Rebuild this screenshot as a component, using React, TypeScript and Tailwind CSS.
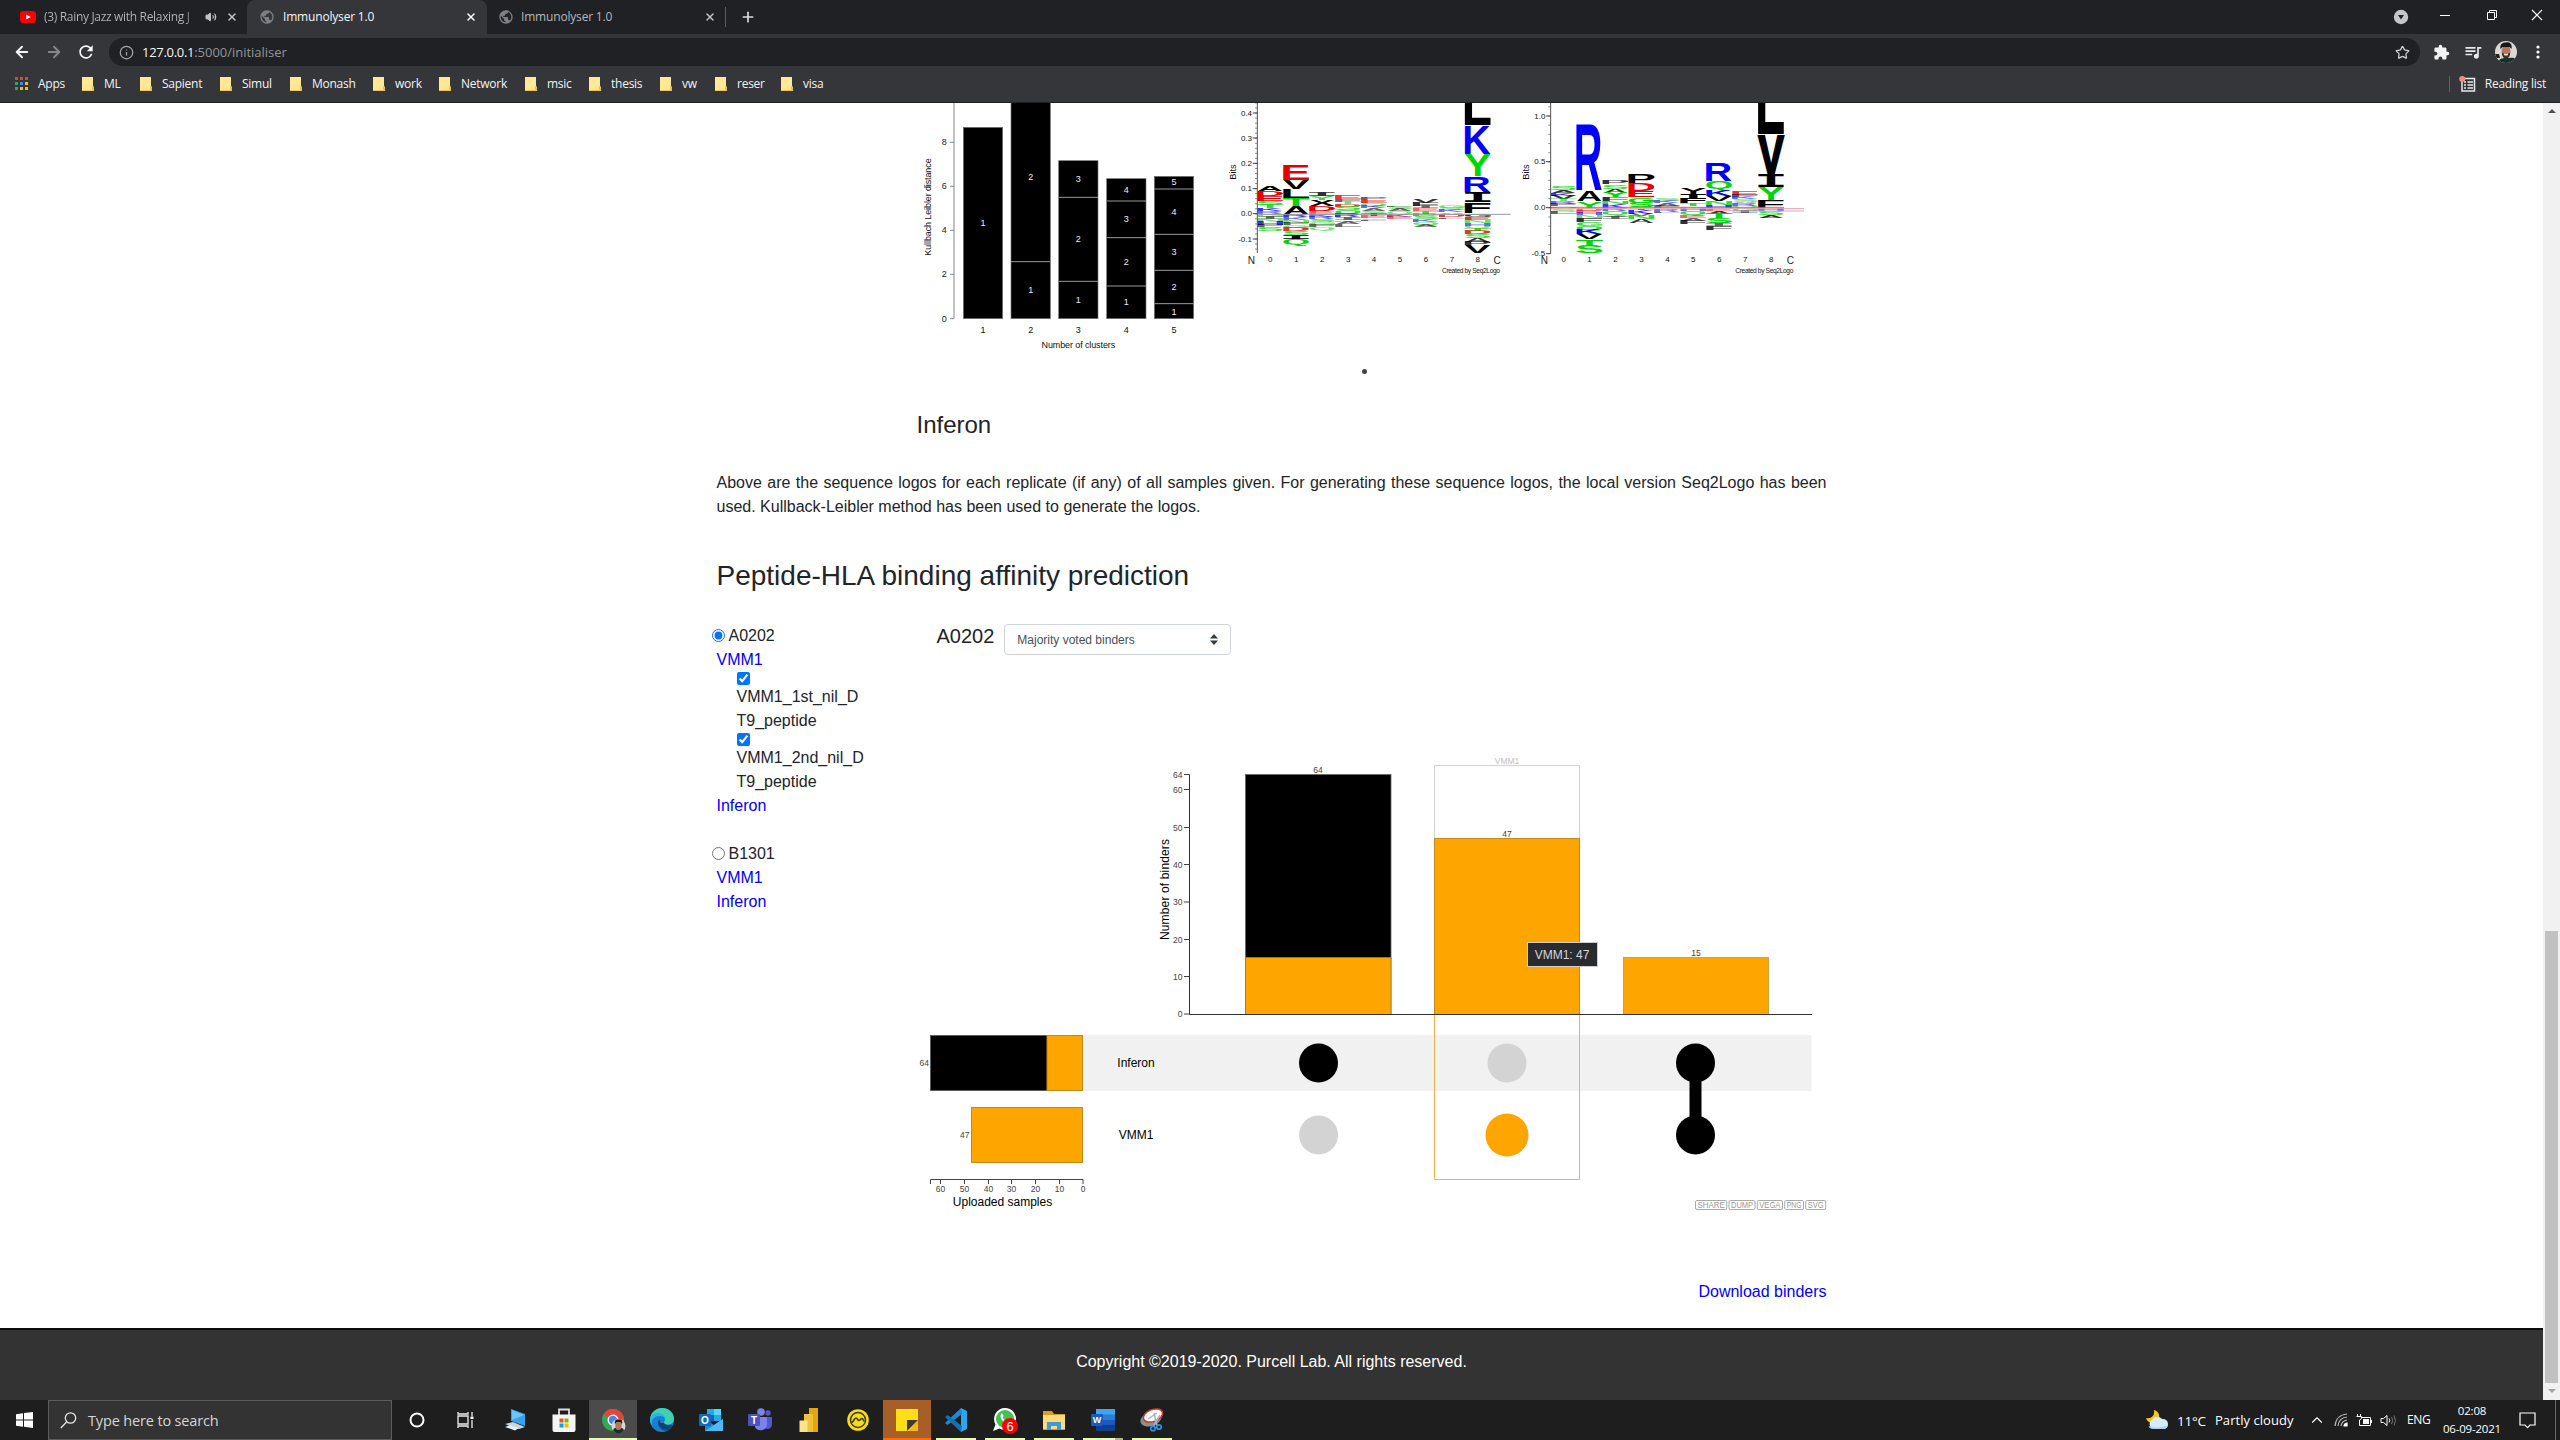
import React from "react";
import {
  ArrowLeft,
  ArrowRight,
  Info,
  Star,
  X,
  Plus,
  Volume2,
  ChevronUp,
} from "lucide-react";
import { MdExtension, MdQueueMusic, MdPublic, MdRefresh } from "react-icons/md";

const SANS = '"Liberation Sans", Arial, sans-serif';

/* ---------- Browser chrome ---------- */

const bookmarks: { name: string; w: string }[] = [
  { name: "ML", w: "w-[58px]" },
  { name: "Sapient", w: "w-[80px]" },
  { name: "Simul", w: "w-[70px]" },
  { name: "Monash", w: "w-[83px]" },
  { name: "work", w: "w-[66px]" },
  { name: "Network", w: "w-[86px]" },
  { name: "msic", w: "w-[64px]" },
  { name: "thesis", w: "w-[71px]" },
  { name: "vw", w: "w-[55px]" },
  { name: "reser", w: "w-[66px]" },
  { name: "visa", w: "w-[60px]" },
];

function Folder() {
  return (
    <svg width="12" height="14" viewBox="0 0 12 14" className="shrink-0">
      <path d="M0 0h11v9l1 1v4H0z" fill="#ffe793" />
      <path d="M10 9l2 1v4h-2z" fill="#e8c14e" />
      <path d="M0 13h12v1H0z" fill="#e8c65c" />
    </svg>
  );
}

function AppsGrid() {
  const colors = ["#ea4335", "#ea4335", "#ea4335", "#34a853", "#4285f4", "#fbbc05", "#34a853", "#fbbc05", "#fbbc05"];
  return (
    <div className="grid grid-cols-3 gap-[2px] w-[13px] h-[13px] shrink-0">
      {colors.map((c, i) => (
        <span key={i} style={{ background: c }} />
      ))}
    </div>
  );
}

function TabStrip() {
  return (
    <div className="flex h-[34px] bg-[#202124] items-stretch">
      <div className="flex items-center w-[247px] pl-5 text-[#a2a5a9]">
        <svg width="16" height="12" viewBox="0 0 16 12" className="shrink-0">
          <rect width="16" height="12" rx="3" fill="#f00" />
          <path d="M6.2 3.4v5.2L10.8 6z" fill="#fff" />
        </svg>
        <span className="ml-2 w-[153px] whitespace-nowrap text-[12px] tracking-[-0.32px] bg-linear-to-r from-[#b4b7bb] from-92% to-[#2a2b2e] bg-clip-text text-transparent">
          (3) Rainy Jazz with Relaxing J
        </span>
        <Volume2 size={12} className="ml-[8px] text-[#c0c3c7]" fill="currentColor" />
        <X size={12} strokeWidth={3} className="ml-[9px] text-[#c0c3c7]" />
      </div>
      <div className="flex items-center w-[240px] bg-[#35363a] rounded-t-lg pl-3">
        <MdPublic size={16} className="text-[#7d8085]" />
        <span className="ml-2 w-[180px] text-[12px] tracking-[-0.18px] text-[#f4f5f6]">Immunolyser 1.0</span>
        <X size={12} strokeWidth={3} className="ml-[2px] text-white" />
      </div>
      <div className="flex items-center w-[238px] pl-[11px]">
        <MdPublic size={16} className="text-[#7d8085]" />
        <span className="ml-[7px] w-[181px] text-[12px] tracking-[-0.18px] text-[#b4b7bb]">Immunolyser 1.0</span>
        <X size={12} strokeWidth={3} className="ml-[2px] text-[#c0c3c7]" />
      </div>
      <span className="w-px h-5 my-auto bg-[#5a5c60]" />
      <Plus size={16} strokeWidth={2.5} className="my-auto ml-[14px] text-[#dadce0]" />
      <div className="ml-auto flex items-center pr-[17px] text-white">
        <svg width="16" height="16" viewBox="0 0 16 16">
          <circle cx="8" cy="8" r="7.2" fill="#c4c6ca" />
          <path d="M5 6h6l-3 4.500z" fill="#202124" />
        </svg>
        <span className="ml-[31px] mb-[4px] w-[10px] h-px bg-white" />
        <svg width="12" height="12" viewBox="0 0 12 12" className="ml-[36px] mb-[5px]" fill="none" stroke="#fff">
          <path d="M1.500 3.500h7v7h-7zM3.500 3.500v-2h7v7h-2" />
        </svg>
        <svg width="12" height="12" viewBox="0 0 12 12" className="ml-[33px] mb-[5px]" stroke="#fff" strokeWidth="1.2">
          <path d="M1 1l10 10M11 1L1 11" />
        </svg>
      </div>
    </div>
  );
}

function Toolbar() {
  return (
    <div className="flex items-center h-[36px] bg-[#35363a] pl-[13px] pr-[14px]">
      <ArrowLeft size={18} strokeWidth={2.5} className="text-[#f1f3f4]" />
      <ArrowRight size={18} strokeWidth={2.5} className="ml-[14px] text-[#85878b]" />
      <MdRefresh size={20} className="ml-[13px] text-white" />
      <div className="flex items-center ml-[13px] w-[2311px] h-7 rounded-full bg-[#202124] pl-[10px] pr-[10px]">
        <Info size={15} className="text-[#a4a7ab]" />
        <span className="ml-[8px] text-[13px] leading-none tracking-[-0.02px] text-[#f4f5f6]">
          <span className="tracking-[-0.3px]">127.0.0.1</span>
          <span className="text-[#92959a]">:5000/initialiser</span>
        </span>
        <Star size={15} className="ml-auto text-[#d0d2d5]" />
      </div>
      <MdExtension size={17} className="ml-[13px] text-[#f1f3f4]" />
      <MdQueueMusic size={20} className="ml-[13px] text-[#e8eaed]" />
      <svg width="22" height="22" viewBox="0 0 22 22" className="ml-[12px]">
        <clipPath id="avatar">
          <circle cx="11" cy="11" r="11" />
        </clipPath>
        <g clipPath="url(#avatar)">
          <rect width="22" height="22" fill="#dcd8d4" />
          <path d="M3 22c0-4 4-5 8-5s11-2 12 5z" fill="#16302c" />
          <ellipse cx="11" cy="10.500" rx="4.500" ry="6.500" fill="#b0785f" />
          <path d="M5.500 8C4.500 3 8 1 11 1.500c4-1 6.500 2 5.500 6.500l-2-2H7.500z" fill="#17181c" />
          <path d="M7 12h8c0 4-2 5.500-4 5.500S7 16 7 12z" fill="#4b2b25" />
          <path d="M8.500 12.500h5l-1 2h-3z" fill="#f3e9e4" />
          <path d="M0 13h4l1 4H1z" fill="#222" />
        </g>
      </svg>
      <svg width="4" height="14" viewBox="0 0 4 14" className="ml-[19px]" fill="#fff">
        <circle cx="2" cy="2" r="1.600" />
        <circle cx="2" cy="7" r="1.600" />
        <circle cx="2" cy="12" r="1.600" />
      </svg>
    </div>
  );
}

function BookmarkBar() {
  return (
    <div className="flex items-center h-[33px] pb-[5px] bg-[#35363a] border-b border-[#1f2023] pl-[15px] text-[12px] tracking-[-0.25px] text-[#f1f3f4]">
      <div className="flex items-center w-[67px]">
        <AppsGrid />
        <span className="ml-[10px]">Apps</span>
      </div>
      {bookmarks.map((b) => (
        <div key={b.name} className={`flex items-center ${b.w}`}>
          <Folder />
          <span className="ml-[10px]">{b.name}</span>
        </div>
      ))}
      <div className="ml-auto flex items-center pr-[14px]">
        <span className="w-px h-4 bg-[#5f6165]" />
        <svg width="17" height="16" viewBox="0 0 17 16" className="ml-[9px]">
          <rect x="3" y="2.500" width="12.500" height="12.500" fill="none" stroke="#e8eaed" strokeWidth="1.500" />
          <path d="M5 6h2M5 9h2M5 12h2M8.500 6H14M8.500 9H14M8.500 12H14" stroke="#e8eaed" strokeWidth="1.400" />
          <circle cx="3.200" cy="3" r="3" fill="#f28b82" />
        </svg>
        <span className="ml-[9px]">Reading list</span>
      </div>
    </div>
  );
}

/* ---------- Cluster bar chart ---------- */

const clusterBars: { x: number; top: number; cuts: number[]; labels: [string, number][] }[] = [
  { x: 190, top: 82, cuts: [], labels: [["1", 370]] },
  { x: 333, top: 0, cuts: [485], labels: [["2", 231], ["1", 570]] },
  { x: 476, top: 182, cuts: [292, 544], labels: [["3", 236], ["2", 417], ["1", 600]] },
  { x: 620, top: 236, cuts: [303, 413, 558], labels: [["4", 269], ["3", 358], ["2", 486], ["1", 607]] },
  { x: 763, top: 229, cuts: [267, 403, 511, 611], labels: [["5", 247], ["4", 335], ["3", 456], ["2", 561], ["1", 635]] },
];

function ClusterChart() {
  return (
    <svg width="310" height="257" viewBox="0 9 930 771" fontFamily={SANS} className="shrink-0">
      <path d="M162 9V656" stroke="#888" strokeWidth="3" />
      {[["8", 127], ["6", 259], ["4", 391], ["2", 523], ["0", 656]].map(([t, y]) => (
        <g key={t}>
          <path d={`M150 ${y}H162`} stroke="#888" strokeWidth="3" />
          <text x="133" y={Number(y) + 9} fontSize="27" fill="#222" textAnchor="middle">{t}</text>
        </g>
      ))}
      <text transform="translate(94 321) rotate(-90)" fontSize="27" fill="#111" textAnchor="middle" textLength="292">
        Kullbach Leibler distance
      </text>
      {clusterBars.map((b, i) => (
        <g key={i}>
          <rect x={b.x} y={b.top} width="118" height={656 - b.top} fill="#000" stroke="#777" strokeWidth="2" />
          {b.cuts.map((c) => (
            <path key={c} d={`M${b.x} ${c}h118`} stroke="#999" strokeWidth="3" />
          ))}
          {b.labels.map(([t, y]) => (
            <text key={t} x={b.x + 59} y={y + 9} fontSize="27" fill="#eee" textAnchor="middle">{t}</text>
          ))}
          <text x={b.x + 59} y="700" fontSize="27" fill="#111" textAnchor="middle">{i + 1}</text>
        </g>
      ))}
      <text x="535" y="743" fontSize="27" fill="#111" textAnchor="middle" textLength="221">
        Number of clusters
      </text>
    </svg>
  );
}

/* ---------- Sequence logos ---------- */

type Glyph = [string, string, number, number];

const INK: Record<string, [number, number]> = {
  A: [0, 0.722], R: [0.07, 0.715], E: [0.067, 0.628], V: [0, 0.667], L: [0.067, 0.58],
  K: [0.067, 0.72], Y: [0.01, 0.657], F: [0.067, 0.58], T: [0.02, 0.59], D: [0.067, 0.68],
  P: [0.067, 0.63], S: [0.03, 0.63], G: [0.04, 0.71], Q: [0.04, 0.74], N: [0.067, 0.65],
  H: [0.067, 0.655], X: [0, 0.667], I: [0.08, 0.522],
};

const HUE: Record<string, string> = { k: "#000", r: "#e60000", g: "#00d600", b: "#0000ff" };

function LogoLetter({ x, g }: { x: number; g: Glyph }) {
  const [ch, hue, top, bottom] = g;
  const [l, r] = INK[ch];
  const mono = ch === "I";
  const h = bottom - top;
  const sx = 77 / ((r - l) * 100);
  const sy = h / (mono ? 72.9 : 68.8);
  return (
    <text
      transform={`translate(${x - l * 100 * sx} ${bottom}) scale(${sx} ${sy})`}
      fontSize="100"
      fontWeight="700"
      fontFamily={mono ? '"DejaVu Sans Mono", monospace' : SANS}
      fill={HUE[hue]}
      stroke={HUE[hue]}
      strokeWidth={h > 90 && ch === "V" ? 4 : 0}
      opacity={h < 9 ? 0.6 : h < 13 ? 0.8 : 1}
    >
      {ch}
    </text>
  );
}

const logoA: Glyph[][] = [
  [["A", "k", 258, 273], ["D", "r", 273, 289], ["E", "r", 289, 304], ["S", "g", 304, 314], ["T", "g", 314, 324], ["K", "b", 324, 333], ["R", "b", 333, 341], ["G", "g", 343, 350], ["I", "k", 350, 358], ["N", "g", 358, 365], ["H", "b", 365, 375], ["F", "k", 375, 382], ["S", "g", 382, 392]],
  [["E", "r", 193, 240], ["V", "k", 240, 268], ["L", "k", 269, 294], ["T", "g", 295, 320], ["A", "k", 320, 342], ["R", "b", 343, 352], ["K", "b", 352, 360], ["N", "g", 360, 368], ["F", "k", 368, 375], ["G", "g", 375, 383], ["D", "r", 383, 394], ["S", "g", 394, 405], ["I", "k", 405, 418], ["Q", "g", 418, 432]],
  [["I", "k", 277, 289], ["Y", "g", 290, 301], ["X", "k", 301, 318], ["D", "r", 318, 334], ["E", "r", 334, 341], ["K", "b", 342, 350], ["R", "b", 350, 358], ["S", "g", 358, 367], ["G", "g", 367, 375], ["F", "k", 375, 382], ["Q", "g", 382, 390]],
  [["E", "r", 286, 298], ["F", "k", 298, 305], ["T", "g", 305, 311], ["D", "r", 311, 320], ["S", "g", 320, 330], ["Q", "g", 330, 341], ["R", "b", 342, 352], ["I", "k", 352, 360], ["N", "g", 360, 365], ["A", "k", 365, 373], ["L", "k", 373, 380]],
  [["P", "k", 295, 301], ["E", "r", 301, 310], ["Q", "g", 310, 318], ["K", "b", 318, 325], ["A", "k", 325, 333], ["S", "g", 333, 341], ["T", "k", 342, 348], ["E", "r", 348, 355], ["G", "g", 355, 360], ["F", "k", 360, 364]],
  [["L", "k", 316, 321], ["S", "g", 321, 328], ["A", "k", 328, 334], ["Q", "g", 334, 341], ["K", "b", 343, 350], ["E", "r", 350, 358]],
  [["V", "k", 298, 308], ["F", "k", 308, 318], ["I", "k", 318, 324], ["E", "r", 324, 332], ["T", "g", 332, 341], ["D", "r", 343, 349], ["S", "g", 349, 358], ["K", "b", 358, 366], ["Q", "g", 366, 374], ["A", "k", 374, 380]],
  [["G", "g", 316, 324], ["S", "g", 324, 330], ["K", "b", 330, 336], ["A", "k", 336, 341], ["D", "r", 343, 352], ["L", "k", 352, 356]],
  [["L", "k", -60, 74], ["K", "b", 76, 161], ["Y", "g", 163, 228], ["R", "b", 230, 275], ["I", "k", 277, 307], ["F", "k", 308, 340], ["G", "k", 343, 352], ["E", "r", 352, 361], ["N", "g", 361, 369], ["H", "b", 369, 377], ["Q", "g", 377, 384], ["T", "g", 384, 393], ["D", "r", 393, 403], ["S", "g", 403, 413], ["A", "k", 415, 425], ["P", "k", 423, 435], ["V", "k", 438, 459]],
];

const logoB: Glyph[][] = [
  [["S", "g", 258, 269], ["A", "k", 269, 278], ["K", "b", 278, 287], ["V", "k", 287, 297], ["T", "g", 297, 304], ["R", "b", 304, 312], ["F", "k", 312, 318], ["H", "b", 318, 323], ["S", "g", 328, 336], ["L", "k", 336, 342]],
  [["R", "b", 76, 271], ["A", "k", 272, 303], ["Y", "g", 305, 323], ["D", "r", 326, 333], ["E", "r", 333, 339], ["H", "b", 339, 346], ["N", "g", 346, 354], ["F", "k", 354, 366], ["G", "g", 366, 378], ["Q", "g", 378, 390], ["K", "b", 390, 403], ["V", "k", 404, 418], ["T", "g", 420, 438], ["S", "g", 438, 459]],
  [["P", "k", 241, 252], ["S", "g", 254, 266], ["A", "k", 266, 278], ["Y", "g", 278, 292], ["F", "k", 293, 303], ["N", "g", 303, 312], ["K", "b", 312, 323], ["R", "b", 326, 333], ["Q", "g", 333, 345], ["V", "k", 345, 350], ["I", "k", 350, 357]],
  [["P", "k", 222, 248], ["D", "r", 250, 272], ["E", "r", 273, 292], ["G", "g", 294, 308], ["S", "g", 308, 322], ["T", "k", 326, 331], ["K", "b", 331, 341], ["V", "k", 341, 347], ["N", "g", 347, 358], ["A", "k", 358, 368]],
  [["S", "g", 297, 304], ["K", "b", 304, 310], ["A", "k", 310, 317], ["F", "k", 317, 323], ["R", "b", 328, 335], ["F", "k", 335, 340]],
  [["Y", "k", 261, 281], ["I", "k", 281, 296], ["F", "k", 296, 309], ["T", "g", 309, 318], ["N", "g", 318, 323], ["H", "b", 326, 334], ["Q", "g", 334, 346], ["E", "r", 347, 354], ["A", "k", 354, 362], ["F", "k", 362, 372]],
  [["R", "b", 189, 244], ["Q", "g", 245, 268], ["K", "b", 269, 289], ["V", "k", 289, 302], ["N", "g", 303, 315], ["H", "b", 315, 324], ["E", "r", 326, 333], ["A", "k", 333, 342], ["T", "g", 342, 355], ["S", "g", 355, 370], ["I", "k", 370, 377], ["F", "k", 378, 390]],
  [["E", "r", 276, 286], ["F", "k", 286, 292], ["K", "b", 292, 298], ["S", "g", 298, 305], ["A", "k", 305, 310], ["R", "b", 310, 317], ["Q", "g", 317, 323], ["G", "g", 326, 332], ["I", "k", 332, 338]],
  [["L", "k", -120, 103], ["V", "k", 106, 222], ["I", "k", 222, 262], ["Y", "g", 263, 299], ["F", "k", 300, 323], ["H", "b", 326, 334], ["S", "g", 334, 344], ["A", "k", 344, 353]],
];

interface LogoProps {
  data: Glyph[][];
  axisX: number;
  axisEnd: number;
  majors: [string, number][];
  minorStep: number;
  bitsX: number;
  nX: number;
  base: React.ReactNode;
}

function SequenceLogo({ data, axisX, axisEnd, majors, minorStep, bitsX, nX, base }: LogoProps) {
  const minors: number[] = [];
  for (let y = majors[0][1] - minorStep * 2; y < axisEnd; y += minorStep) minors.push(y);
  return (
    <svg width="310" height="257" viewBox="0 9 930 771" fontFamily={SANS} className="shrink-0">
      {data.map((col, i) => (
        <g key={i}>
          {col.map((g, j) => (
            <LogoLetter key={j} x={axisX + i * 77.8} g={g} />
          ))}
          <text x={axisX + 39 + i * 77.8} y="486" fontSize="24" fill="#111" textAnchor="middle">{i}</text>
        </g>
      ))}
      {base}
      <path d={`M${axisX} 0V${axisEnd}`} stroke="#555" strokeWidth="3" />
      {minors.map((y) => (
        <path key={y} d={`M${axisX - 7} ${y}H${axisX}`} stroke="#555" strokeWidth="2" />
      ))}
      {majors.map(([t, y]) => (
        <g key={t}>
          <path d={`M${axisX - 14} ${y}H${axisX}`} stroke="#444" strokeWidth="3" />
          <text x={axisX - 16} y={y + 8} fontSize="24" fill="#111" textAnchor="end">{t}</text>
        </g>
      ))}
      <text transform={`translate(${bitsX} 216) rotate(-90)`} fontSize="28" fill="#111" textAnchor="middle">Bits</text>
      <text x={nX} y="493" fontSize="30" fill="#222" textAnchor="middle">N</text>
      <text x={axisX + 719} y="493" fontSize="30" fill="#222" textAnchor="middle">C</text>
      <text x={axisX + 728} y="519" fontSize="20" fill="#111" textAnchor="end" textLength="174">Created by Seq2Logo</text>
    </svg>
  );
}

/* ---------- UpSet plot (units are page pixels) ---------- */

const yTicks: [string, number][] = [["64", 774.5], ["60", 789.5], ["50", 827.5], ["40", 864.5], ["30", 902], ["20", 939.5], ["10", 976.5], ["0", 1014]];
const xTicks: [string, number][] = [["60", 940.5], ["50", 964.5], ["40", 988.5], ["30", 1011.5], ["20", 1035.5], ["10", 1059.5], ["0", 1083]];
const exportButtons: [string, number, number][] = [["SHARE", 1695, 32.3], ["DUMP", 1728.5, 27], ["VEGA", 1756.7, 26.3], ["PNG", 1784.2, 19.8], ["SVG", 1805.2, 21]];

function UpsetPlot() {
  return (
    <svg width="930" height="465" viewBox="900 750 930 465" fontFamily={SANS} className="shrink-0">
      <rect x="1083" y="1035" width="728.500" height="56" fill="#f1f1f1" />
      <g fill="#444" fontSize="8.500">
        {yTicks.map(([t, y]) => (
          <g key={t}>
            <path d={`M1184 ${y}h5.500`} stroke="#444" />
            <text x="1182.500" y={y + 3} textAnchor="end">{t}</text>
          </g>
        ))}
        {xTicks.map(([t, x]) => (
          <g key={t}>
            <path d={`M${x} 1179.500v4.500`} stroke="#444" />
            <text x={x} y="1192" textAnchor="middle">{t}</text>
          </g>
        ))}
        <text x="1318" y="773" textAnchor="middle">64</text>
        <text x="1507" y="837" textAnchor="middle">47</text>
        <text x="1696" y="956" textAnchor="middle">15</text>
        <text x="1507" y="764" textAnchor="middle" fill="#c0c0c0">VMM1</text>
        <text x="929" y="1066" textAnchor="end">64</text>
        <text x="969.500" y="1138" textAnchor="end">47</text>
      </g>
      <path d="M930.500 1184v-4.500H1083" fill="none" stroke="#444" />
      <rect x="1434.500" y="765.500" width="145" height="249" fill="none" stroke="#d3d3d3" />
      <rect x="1245.500" y="774.500" width="145.500" height="240" fill="#000" stroke="#666" strokeWidth="0.800" />
      <rect x="1245.500" y="957.500" width="145.500" height="57" fill="#ffa500" stroke="#a87b28" strokeWidth="0.800" />
      <rect x="1434.500" y="838.500" width="145" height="176" fill="#ffa500" stroke="#c28a1c" />
      <rect x="1623.500" y="957.500" width="145" height="57" fill="#ffa500" stroke="#c9952f" strokeWidth="0.800" />
      <path d="M1189.500 774.500V1014.500H1812" fill="none" stroke="#333" />
      <text transform="translate(1168.500 889.500) rotate(-90)" fontSize="12" textAnchor="middle" textLength="101">Number of binders</text>
      <rect x="930.500" y="1035.500" width="152" height="55" fill="#000" stroke="#555" strokeWidth="0.800" />
      <rect x="1047" y="1035.500" width="35.500" height="55" fill="#ffa500" stroke="#c28a1c" />
      <rect x="971.500" y="1107.500" width="111" height="55" fill="#ffa500" stroke="#c28a1c" />
      <g fontSize="12" textAnchor="middle">
        <text x="1136" y="1067">Inferon</text>
        <text x="1136" y="1139">VMM1</text>
        <text x="1002.500" y="1206">Uploaded samples</text>
      </g>
      <path d="M1434.500 1015V1179.500H1579.500V1015" fill="none" stroke="#efb346" />
      <circle cx="1318.500" cy="1063" r="19.500" />
      <circle cx="1507" cy="1063" r="19.500" fill="#d3d3d3" />
      <circle cx="1318.500" cy="1135" r="19.500" fill="#d3d3d3" />
      <circle cx="1507" cy="1135" r="21.500" fill="#ffa500" />
      <circle cx="1695.500" cy="1063" r="19.500" />
      <circle cx="1695.500" cy="1135" r="19.500" />
      <path d="M1695.500 1063V1135" stroke="#000" strokeWidth="12" />
      {exportButtons.map(([t, x, w]) => (
        <g key={t}>
          <rect x={x + 0.5} y="1200.500" width={w - 1} height="9" rx="1.500" fill="#fff" stroke="#aaa" />
          <text x={x + w / 2} y="1208.200" fontSize="9" fill="#999" textAnchor="middle" textLength={w - 5} lengthAdjust="spacingAndGlyphs">{t}</text>
        </g>
      ))}
    </svg>
  );
}

/* ---------- Page ---------- */

function Sidebar() {
  return (
    <div className="w-[220px] pt-[1px] text-[16px] leading-6 text-[#212529]">
      <label className="flex items-center h-6 -ml-[5px]">
        <input type="radio" name="hla" defaultChecked className="w-[13px] h-[13px] m-0 mb-[2px] accent-[#0075ff]" />
        <span className="ml-[4px]">A0202</span>
      </label>
      <a className="block text-[#0000ff]">VMM1</a>
      {["VMM1_1st_nil_D", "VMM1_2nd_nil_D"].map((s) => (
        <div key={s} className="pl-5">
          <input type="checkbox" defaultChecked className="block w-[13px] h-[13px] m-0 accent-[#0075ff]" />
          <div>{s}</div>
          <div>T9_peptide</div>
        </div>
      ))}
      <a className="block text-[#0000ff]">Inferon</a>
      <label className="mt-6 flex items-center h-6 -ml-[5px]">
        <input type="radio" name="hla" className="w-[13px] h-[13px] m-0 mb-[2px]" />
        <span className="ml-[4px]">B1301</span>
      </label>
      <a className="block text-[#0000ff]">VMM1</a>
      <a className="block text-[#0000ff]">Inferon</a>
    </div>
  );
}

function Page() {
  return (
    <div className="w-[2543px] h-[1297px] bg-white overflow-hidden flex flex-col font-['Liberation_Sans',Arial,sans-serif] text-[#212529]">
      <div className="flex pl-[900px]">
        <ClusterChart />
        <SequenceLogo
          data={logoA}
          axisX={142}
          axisEnd={459}
          majors={[["0.4", 39], ["0.3", 114], ["0.2", 190], ["0.1", 266], ["0.0", 341], ["-0.1", 417]]}
          minorStep={15.12}
          bitsX={78}
          nX={124}
          base={<path d="M142 343H902" stroke="#999" strokeWidth="3" />}
        />
        <SequenceLogo
          data={logoB}
          axisX={92}
          axisEnd={461}
          majors={[["1.0", 48], ["0.5", 185], ["0.0", 323], ["-0.5", 461]]}
          minorStep={27.55}
          bitsX={28}
          nX={73}
          base={
            <g strokeWidth="3">
              <path d="M92 322H792" stroke="#888" />
              <path d="M92 326H852" stroke="#f0a0a0" />
              <path d="M636 333H852" stroke="#b0b0ff" />
            </g>
          }
        />
      </div>
      <div className="ml-[1362px] mt-[9px] w-[5px] h-[5px] rounded-full bg-[#444]" />
      <div className="mx-auto w-[1110px] flex flex-col">
        <h4 className="ml-[200px] mt-[37px] text-[24px] leading-7">Inferon</h4>
        <p className="mt-[32px] text-[16px] leading-6 text-justify">
          Above are the sequence logos for each replicate (if any) of all samples given. For generating these sequence
          logos, the local version Seq2Logo has been used. Kullback-Leibler method has been used to generate the logos.
        </p>
        <h3 className="mt-[40px] text-[28px] leading-[34px]">Peptide-HLA binding affinity prediction</h3>
        <div className="flex mt-[30px] h-[593px]">
          <Sidebar />
          <div className="flex flex-col w-[890px]">
            <div className="flex items-start h-[127px]">
              <span className="mt-[1px] text-[20px] leading-6">A0202</span>
              <div className="ml-[10px] mt-[1px] flex items-center justify-between w-[227px] h-[31px] rounded border border-[#ced4da] pl-3 pr-[11px] text-[12px] text-[#495057]">
                Majority voted binders
                <svg width="10" height="11" viewBox="0 0 10 11" fill="#343a40">
                  <path d="M1 4.500L5 0l4 4.500zM1 6.500L5 11l4-4.500z" />
                </svg>
              </div>
            </div>
            <div className="relative -ml-[37px] w-[930px]">
              <UpsetPlot />
              <div className="absolute left-[627px] top-[192px] w-[71px] h-[25px] flex items-center justify-center border border-[#cfd0d2] bg-[#292b2f] text-[12px] text-[#d5d6d8]">
                VMM1: 47
              </div>
            </div>
          </div>
        </div>
        <a className="mt-[64px] self-end text-[16px] leading-6 text-[#0000ff]">Download binders</a>
      </div>
      <footer className="mt-auto h-[72px] shrink-0 border-t-2 border-[#0c0c0c] bg-[#333] text-center text-[16px] leading-[63px] text-white">
        Copyright ©2019-2020. Purcell Lab. All rights reserved.
      </footer>
    </div>
  );
}

function Scrollbar() {
  return (
    <div className="w-[17px] h-[1297px] bg-[#f1f1f1] flex flex-col items-center">
      <span className="mt-[6px] border-x-4 border-b-4 border-x-transparent border-b-[#505050]" />
      <span className="mt-auto w-[13px] h-[452px] bg-[#c1c1c1]" />
      <span className="mt-[6px] mb-[7px] border-x-4 border-t-4 border-x-transparent border-t-[#a3a3a3]" />
    </div>
  );
}

/* ---------- Taskbar ---------- */

const icons: Record<string, React.ReactNode> = {
  cortana: <circle cx="12" cy="12" r="6.500" fill="none" stroke="#fff" strokeWidth="2" />,
  taskview: (
    <g fill="none" stroke="#eee" strokeWidth="1.300">
      <path d="M4 8h10v8H4zM4 4v2h10V4M4 20v-2h10v2M18 4v4M18 12v8" />
      <path d="M16.500 8.500h3v2.500h-3z" fill="#fff" stroke="none" />
    </g>
  ),
  laptop: (
    <g>
      <path d="M8 1l14 5v12L8 13z" fill="#3aa0ee" />
      <path d="M9 2l12 5-12 5z" fill="#6cc4fb" />
      <path d="M2 16l8-2 12 5-6 2-4-1z" fill="#c9d3da" />
      <path d="M2 19l5-2 9 3-4 2.500z" fill="#e8edf0" />
    </g>
  ),
  store: (
    <g>
      <path d="M7 8V1.500h10V8" fill="none" stroke="#ddd" strokeWidth="1.800" />
      <path d="M.5 6.500h23V22a2 2 0 01-2 2h-19a2 2 0 01-2-2z" fill="#f5f5f5" />
      <path d="M7.500 10.500h4v4h-4z" fill="#f25022" />
      <path d="M12.500 10.500h4v4h-4z" fill="#7fba00" />
      <path d="M7.500 15.500h4v4h-4z" fill="#00a4ef" />
      <path d="M12.500 15.500h4v4h-4z" fill="#ffb900" />
    </g>
  ),
  chrome: (
    <g>
      <circle cx="12" cy="12" r="11" fill="#34a853" />
      <path d="M12 12L2.500 6.500A11 11 0 0123 12z" fill="#ea4335" />
      <path d="M12 12h11a11 11 0 01-10.500 11z" fill="#fbbc05" />
      <circle cx="12" cy="12" r="5.500" fill="#fff" />
      <circle cx="12" cy="12" r="4.200" fill="#4285f4" />
      <circle cx="17.500" cy="18" r="7" fill="#d9d5d1" />
      <path d="M12 22.500c1-3 3-3 5.500-3s5 .5 5.500 3a7 7 0 01-11 0z" fill="#16302c" />
      <ellipse cx="17.500" cy="17.500" rx="3.200" ry="4.500" fill="#b0785f" />
      <path d="M14 16c-1-4 2-5 3.500-4.500C20 11 22 12 21 16l-1.500-2h-4z" fill="#17181c" />
    </g>
  ),
  edge: (
    <g>
      <circle cx="12" cy="12" r="12" fill="#1b7fd0" />
      <path d="M0 11C1 4 6 0 12 0c7 0 12 5 12 10.500 0 4-3 6-6 6-2 0-4-1-4-2 0-.8 1-1 1-3C15 9 13 7 9.500 7 5 7 1 9 0 11z" fill="#3fd2b0" />
      <path d="M0 12c1-5 5-8 10-7 3 .5 5 3 5 6C15 9 13 8 10 8c-5 0-9 3-8 9-1.500-1.500-2-3-2-5z" fill="#2bb4e8" />
      <path d="M8 13c-1 5 3 10 9 9.800 2-.8 4-2 5-4-5 2-12 1-12-7z" fill="#10498f" />
      <path d="M14 15c1 2 4 3 7 1.500l1.500 1.500C20 21 12 22 10 15z" fill="#202020" opacity=".6" />
    </g>
  ),
  outlook: (
    <g>
      <path d="M8 1h14v12H8z" fill="#28a8ea" />
      <path d="M15 1h7v6h-7z" fill="#50d9ff" />
      <path d="M8 7h7v6H8z" fill="#0364b8" />
      <path d="M6 11l9 6 9-6v12H6z" fill="#1490df" />
      <path d="M6 23l18-12v12z" fill="#50b8f4" />
      <rect x="0" y="6" width="12" height="12" rx="1" fill="#0f6cbd" />
      <text x="6" y="15.500" fontSize="10" fontWeight="700" fill="#fff" textAnchor="middle">O</text>
    </g>
  ),
  teams: (
    <g>
      <circle cx="20" cy="5" r="2.700" fill="#5059c9" />
      <circle cx="13" cy="4" r="3.800" fill="#7b83eb" />
      <path d="M15 9h9v7a4.500 4.500 0 01-9 1z" fill="#5059c9" />
      <path d="M7 9h12v8a6.500 6.500 0 01-12 2z" fill="#7b83eb" />
      <rect x="0" y="6" width="12" height="12" rx="1" fill="#4b53bc" />
      <text x="6" y="15.500" fontSize="10" fontWeight="700" fill="#fff" textAnchor="middle">T</text>
    </g>
  ),
  powerbi: (
    <g>
      <path d="M12 0h9v24h-9z" fill="#e3a512" />
      <path d="M7 6h9v18H7z" fill="#f2c236" />
      <path d="M2.500 12.500h8V24h-8z" fill="#fbe38b" />
    </g>
  ),
  basecamp: (
    <g>
      <circle cx="12" cy="12" r="10.800" fill="#fbdc13" />
      <circle cx="12" cy="12" r="7.500" fill="none" stroke="#3a3a2a" strokeWidth="1.500" />
      <path d="M5.500 14.500c2 0 2.500-4.500 4.500-4.500 1.500 0 1.500 2.500 3 2.500 1 0 1.500-2 3-2 1.200 0 1.500 2 2 3" fill="none" stroke="#3a3a2a" strokeWidth="1.600" />
    </g>
  ),
  sticky: (
    <g>
      <path d="M1 1h22v12l-9 10H1z" fill="#ffde17" />
      <path d="M12 12h11L12 23z" fill="#3b3b3b" />
      <path d="M23 13v10H13z" fill="#f3ba12" />
    </g>
  ),
  vscode: (
    <g>
      <path d="M17 0l6 3v18l-6 3z" fill="#2aa7f0" />
      <path d="M17 0L1 15l2.500 2L18 6z" fill="#1f8ad2" />
      <path d="M17 24L1 9l2.500-2L18 18z" fill="#1272b8" />
    </g>
  ),
  whatsapp: (
    <g>
      <path d="M12 0a11 11 0 11-5.500 20.500L0 23l2.500-6.500A11 11 0 0112 0z" fill="#fff" />
      <circle cx="12" cy="11" r="9" fill="#3fc351" />
      <path d="M8 6c1-1 2 0 2.500 2 0 1-1 1-.5 2 1 1.500 2 2.500 3.500 3 1 0 1-1.500 2-1 3 1 1.500 3 0 3.500C11 16 6 10 8 6z" fill="#fff" />
      <circle cx="17" cy="18" r="8" fill="#f00" />
      <text x="17" y="22.500" fontSize="13" fill="#fff" textAnchor="middle">6</text>
    </g>
  ),
  explorer: (
    <g>
      <path d="M1 3h9l2 3h11v16H1z" fill="#d99e1e" />
      <path d="M1 7h22v14H1z" fill="#ffdb77" />
      <path d="M5 22v-8h14v8h-4v-4H9v4z" fill="#3c9be0" />
    </g>
  ),
  word: (
    <g>
      <path d="M5 1h19v6H5z" fill="#41a5ee" />
      <path d="M5 6.500h19V12H5z" fill="#2b7cd3" />
      <path d="M5 12h19v5.500H5z" fill="#185abd" />
      <path d="M5 17.500h19V23H5z" fill="#103f91" />
      <rect x="0" y="6" width="12" height="12" rx="1" fill="#185abd" />
      <text x="6" y="15.300" fontSize="9" fontWeight="700" fill="#fff" textAnchor="middle">W</text>
    </g>
  ),
  snip: (
    <g>
      <ellipse cx="11" cy="11" rx="11" ry="7" transform="rotate(-20 11 11)" fill="#8b8f94" />
      <ellipse cx="13" cy="7.500" rx="10" ry="6" transform="rotate(-20 13 7.500)" fill="#fff" stroke="#d8302b" strokeWidth="1.500" />
      <path d="M8 11l9-6M14 5l3 13M20 7l-7 12" stroke="#a9b2b8" strokeWidth="1.500" />
      <circle cx="13" cy="20.500" r="2.200" fill="none" stroke="#2c8fe0" strokeWidth="1.800" />
      <circle cx="19" cy="19" r="2.200" fill="none" stroke="#2c8fe0" strokeWidth="1.800" />
    </g>
  ),
};

const tasks: { id: string; tile?: string; line?: string }[] = [
  { id: "cortana" },
  { id: "taskview" },
  { id: "laptop" },
  { id: "store" },
  { id: "chrome", tile: "bg-[#4b4b4b]", line: "w-12 bg-[#e5ffa8]" },
  { id: "edge" },
  { id: "outlook" },
  { id: "teams" },
  { id: "powerbi" },
  { id: "basecamp" },
  { id: "sticky", tile: "bg-[#a75e28]", line: "w-12 bg-[#ff6f00]" },
  { id: "vscode", line: "w-10 bg-[#e5ffa8]" },
  { id: "whatsapp", line: "w-10 bg-[#e5ffa8]" },
  { id: "explorer", line: "w-10 bg-[#e5ffa8]" },
  { id: "word", line: "w-10 bg-linear-to-r from-[#e5ffa8] from-80% to-[#aebb88] to-80%" },
  { id: "snip", line: "w-10 bg-[#e5ffa8]" },
];

function Taskbar() {
  return (
    <div className="flex h-10 bg-[#1e1e1e] text-white">
      <div className="w-12 flex items-center justify-center">
        <svg width="17" height="16" viewBox="0 0 17 16" fill="#fff">
          <path d="M0 2.300L7 1.300V7.600H0zM8 1.100L17 0v7.600H8zM0 8.500h7v6.200l-7-1zM8 8.500h9V16l-9-1.200z" />
        </svg>
      </div>
      <div className="flex items-center w-[344px] mr-px border border-[#5c5c5c] bg-[#333] pl-[11px] text-[#d6d6d6]">
        <svg width="17" height="17" viewBox="0 0 17 17" fill="none" stroke="#e4e4e4" strokeWidth="1.300">
          <circle cx="10.500" cy="6" r="5.200" />
          <path d="M6.800 9.700L.8 16" />
        </svg>
        <span className="ml-[11px] mt-[2px] text-[14.500px] tracking-[-0.15px]">Type here to search</span>
      </div>
      {tasks.map((t) => (
        <div key={t.id} className="w-[49px] flex">
          <div className={`relative w-12 flex items-center justify-center ${t.tile ?? ""}`}>
            <svg width="24" height="24" viewBox="0 0 24 24" fontFamily={SANS} className="overflow-visible">
              {icons[t.id]}
            </svg>
            {t.line && <span className={`absolute bottom-0 h-[2px] ${t.line}`} />}
          </div>
        </div>
      ))}
      <div className="ml-auto flex items-center">
        <svg width="23" height="20" viewBox="0 0 23 20">
          <path d="M8 0c6 1 7 9 2 12C5 14 1 12 0 8c5 1 9-2 8-8z" fill="#f9c31f" />
          <path d="M7 19a5 5 0 01-1-9 6 6 0 0110-1 5 5 0 016 5c0 3-2 5-5 5z" fill="#d5ecfb" />
          <path d="M7 19c-2 0-4-1-4.500-3 5 2 13 2 19.500-1-.5 2.500-2 4-5 4z" fill="#a8d3f2" />
        </svg>
        <span className="ml-[8px] mt-[2px] w-[38px] text-[13.500px] tracking-[-0.2px]">11°C</span>
        <span className="mt-[2px] w-[95px] text-[13px] tracking-[0.05px] whitespace-nowrap">Partly cloudy</span>
        <ChevronUp size={18} className="-ml-[2px] -mr-px" strokeWidth={1.5} />
        <svg width="14" height="14" viewBox="0 0 14 14" className="ml-[9px]" fill="none" strokeWidth="1.200">
          <path d="M1 13C1.500 6 6 1.500 13 1M4 13C4.500 8 8 4.500 13 4M7 13c.5-3 3-5.500 6-6" stroke="#bbb" />
          <path d="M10 13c0-1.500 1.500-3 3-3v3z" fill="#fff" stroke="#fff" />
        </svg>
        <svg width="17" height="13" viewBox="0 0 17 13" className="ml-[8px]" fill="none" stroke="#fff">
          <path d="M5.500 3.500h9v8h-11V8" />
          <path d="M15.500 6v3" />
          <path d="M7 5h6v5H7z" fill="#fff" stroke="none" />
          <path d="M1.500 0v2M4.500 0v2M.5 2.500h5v2l-2 1.500v2" />
        </svg>
        <svg width="17" height="13" viewBox="0 0 17 13" className="ml-[7px]" fill="none" stroke="#fff">
          <path d="M1 4.500h2.500L7 1.500v10L3.500 8.500H1z" />
          <path d="M9 4.500q1.500 2 0 4" />
          <path d="M11.500 3q2.500 3.500 0 7M14 1.500q3 5 0 10" stroke="#777" />
        </svg>
        <span className="ml-[10px] w-[35px] text-[12px] tracking-[-0.4px]">ENG</span>
        <div className="flex flex-col w-[60px] items-center text-[11.500px] leading-[18px] tracking-[-0.2px] whitespace-nowrap">
          <span>02:08</span>
          <span>06-09-2021</span>
        </div>
        <svg width="17" height="17" viewBox="0 0 17 17" className="ml-[17px]" fill="none" stroke="#fff" strokeWidth="1.200">
          <path d="M1 1h15v12h-5l-2.500 2.700L6 13H1z" />
        </svg>
        <span className="ml-[19px] mr-1 w-px h-10 bg-[#6a6a6a]" />
      </div>
    </div>
  );
}

export default function App() {
  return (
    <div className="w-[2560px] h-[1440px] overflow-hidden flex flex-col font-['Open_Sans','Noto_Sans',sans-serif]">
      <TabStrip />
      <Toolbar />
      <BookmarkBar />
      <div className="flex h-[1297px]">
        <Page />
        <Scrollbar />
      </div>
      <Taskbar />
    </div>
  );
}
